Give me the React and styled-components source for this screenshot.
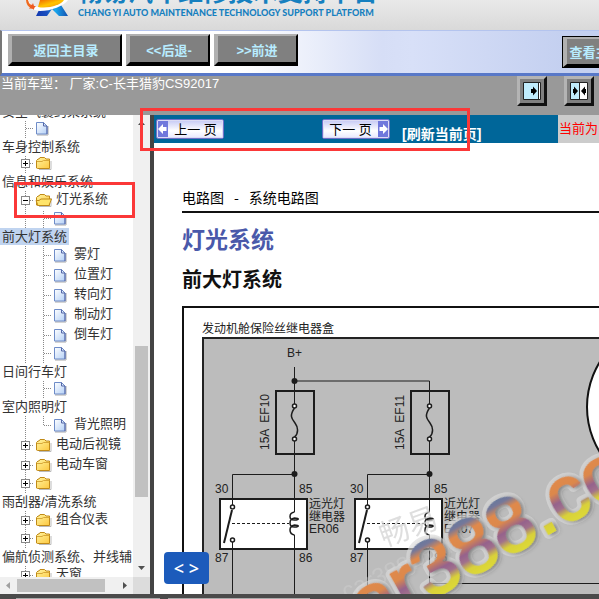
import React from 'react';
import styled, { createGlobalStyle, css } from 'styled-components';

const cjk = '"Liberation Sans", "Noto Sans CJK SC", sans-serif';

const GlobalStyle = createGlobalStyle`
  *, *::before, *::after { box-sizing: border-box; }
  body { margin: 0; font-family: ${cjk}; font-size: 13px; background: #fff; }
  button { font-family: inherit; padding: 0; cursor: pointer; }
  ul { list-style: none; margin: 0; padding: 0; }
`;

const Page = styled.div`
  position: relative;
  display: flex;
  flex-direction: column;
  height: 100vh;
  overflow: hidden;
`;

/* ---------- header ---------- */

const Header = styled.header`
  flex: 0 0 30px;
  display: flex;
  align-items: flex-end;
  gap: 8px;
  padding-left: 24px;
  overflow: hidden;
  background: linear-gradient(#e9e9e9, #d9d9d9);
`;

const LogoMark = styled.svg`
  flex: none;
  width: 46px;
  height: 30px;
`;

const Brand = styled.div`
  display: flex;
  flex-direction: column;
  white-space: nowrap;
  color: #1680bf;
`;

const BrandName = styled.h1`
  margin: 0;
  font: 700 25px/32px "Noto Sans CJK SC", sans-serif;
`;

const BrandSub = styled.span`
  padding-bottom: 10px;
  font: 900 9px/14px Lato, sans-serif;
`;

const Toolbar = styled.nav`
  flex: 0 0 46px;
  display: flex;
  align-items: flex-start;
  gap: 4px;
  padding: 3px 0 0 6px;
  overflow: hidden;
  border-left: 2px solid #777;
  border-top: 1px solid #b4c4ee;
  border-bottom: 3px solid #5878c8;
  background: linear-gradient(90deg, #fff 0, #fff 240px, #d6def6 380px, #d8e0f8 410px, #c4d0f0 560px);
`;

const ToolButton = styled.button`
  flex: 0 0 ${(p) => p.$width}px;
  height: 32px;
  border: 4px solid;
  border-color: #b0b0b0 #000 #000 #b0b0b0;
  border-top-width: 2px;
  border-right-width: 2px;
  background: #808080;
  color: #b8ecff;
  font-size: 13px;
  font-weight: 700;
  white-space: nowrap;
  ${(p) => p.$last && css`
    margin: 2px -29px 0 auto;
    outline: 1px solid #000;
    outline-offset: -1px;
    border-width: 3px 4px 4px 5px;
  `}
`;

const StatusBar = styled.div`
  flex: 0 0 39px;
  display: flex;
  align-items: flex-start;
  gap: 17px;
  padding: 0 5px 0 1px;
  background: #999;
  color: #fff;
`;

const StatusText = styled.span`
  flex: 1;
  line-height: 15px;
`;

const IconButton = styled.button`
  width: 30px;
  height: 30px;
  display: grid;
  place-items: center;
  border: 3px solid;
  border-color: #b4b4b4 #111 #111 #b4b4b4;
  background: #808080;
`;

/* ---------- main split ---------- */

const Main = styled.div`
  flex: 1;
  min-height: 0;
  display: flex;
`;

const Sidebar = styled.aside`
  flex: 0 0 154px;
  display: grid;
  grid-template: minmax(0, 1fr) 17px / minmax(0, 1fr) 17px;
  border-right: 4px solid #444;
`;

const TreeView = styled.div`
  overflow: hidden;
  color: #333;
`;

const TreeList = styled.ul`
  margin-top: -12px;
`;

const TreeItem = styled.li`
  white-space: nowrap;
`;

const TreeRow = styled.div`
  display: flex;
  align-items: ${(p) => (p.$solo ? 'flex-start' : 'center')};
  height: ${(p) => (p.$solo ? 18 : 20)}px;
  padding-left: 16px;
`;

const dots = 'transparent 0 1px, #888 1px 2px';

const Guide = styled.span`
  flex: 0 0 18px;
  align-self: stretch;
  display: flex;
  align-items: ${(p) => (p.$solo ? 'flex-start' : 'center')};
  padding: ${(p) => (p.$solo ? '4px' : '0')} 0 0 5px;
  background-repeat: no-repeat;
  background-image: repeating-linear-gradient(${dots})
    ${(p) => p.$branch && `, repeating-linear-gradient(90deg, ${dots})`};
  background-size: 1px ${(p) => (p.$end ? '50%' : '100%')}, 9px 1px;
  background-position: 9px 0, 9px ${(p) => (p.$solo ? 8 : 10)}px;
`;

const Toggle = styled.button`
  width: 9px;
  height: 9px;
  display: block;
  border: 1px solid #888;
  background:
    linear-gradient(#000, #000) center / 5px 1px no-repeat,
    ${(p) => !p.$open && 'linear-gradient(#000, #000) center / 1px 5px no-repeat,'}
    #fff;
`;

const NodeIcon = styled.svg`
  flex: none;
  width: 18px;
  height: 16px;
  margin: 0 3px 0 1px;
`;

const NodeText = styled.span`
  line-height: 18px;
  padding-bottom: 2px;
`;

const WrappedText = styled.span`
  display: block;
  width: max-content;
  height: 17px;
  padding: 0 2px;
  line-height: 17px;
  background: ${(p) => (p.$selected ? '#c0d4f0' : 'transparent')};
`;

const Track = styled.div`
  display: grid;
  place-items: center;
  background: #f0f0f0;
  ${(p) => (p.$horizontal
    ? 'grid-template-columns: 17px 88px 1fr 17px; grid-template-rows: 13px; align-content: center;'
    : 'grid-template-rows: 17px 1fr 151px 63px 17px; grid-template-columns: 13px; justify-content: center;')}
`;

const Thumb = styled.div`
  width: 100%;
  height: 100%;
  background: #c1c1c1;
  grid-area: ${(p) => p.$area};
`;

const Arrow = styled.svg`
  width: 9px;
  height: 9px;
  grid-area: ${(p) => p.$area};
  fill: ${(p) => p.$color || '#505050'};
`;

const Corner = styled.div`
  background: #dcdcdc;
`;

const Content = styled.main`
  flex: 1;
  min-width: 0;
  display: flex;
  flex-direction: column;
  background: #fff;
`;

const PagerRow = styled.div`
  flex: 0 0 28px;
  display: flex;
`;

const Pager = styled.div`
  flex: 1;
  display: flex;
  align-items: center;
  padding-left: 2px;
  background: #006699;
`;

const PageButton = styled.button`
  display: flex;
  align-items: stretch;
  width: 68px;
  height: 20px;
  margin-right: ${(p) => p.$gap}px;
  border: 1px solid #7070c8;
  border-radius: 2px;
  outline: 1px solid #dcdcf4;
  outline-offset: -2px;
  background: linear-gradient(#c4c8f4, #fff 60%, #e8e8ff);
  color: #000;
  font-size: 13px;
`;

const PageLabel = styled.span`
  flex: 1;
  line-height: 19px;
  white-space: nowrap;
  text-align: center;
`;

const PageArrow = styled.svg`
  width: 11px;
  height: 18px;
  background: #7078dc;
`;

const RefreshLink = styled.a`
  align-self: flex-end;
  color: #fff;
  font-size: 14px;
  font-weight: 700;
  line-height: 18px;
  text-decoration: none;
  white-space: nowrap;
`;

const Notice = styled.div`
  flex: 0 0 41px;
  padding-left: 1px;
  background: #ccc;
  color: #f00;
  line-height: 27px;
  overflow: hidden;
  white-space: nowrap;
`;

const Document = styled.article`
  flex: 1;
  min-height: 0;
  display: flex;
  flex-direction: column;
  padding: 44px 0 0 28px;
  font-family: "Noto Sans CJK SC", sans-serif;
`;

const Crumb = styled.p`
  display: flex;
  gap: 10px;
  margin: 0;
  height: 26px;
  border-bottom: 2px solid #111;
  font-size: 14px;
  line-height: 21px;
`;

const Title = styled.h2`
  margin: 9px 0 0;
  color: #4a59aa;
  font-size: 23px;
  font-weight: 700;
  line-height: 32px;
`;

const Subtitle = styled.h3`
  margin: 11px 0 0;
  color: #111;
  font-size: 20px;
  font-weight: 700;
  line-height: 28px;
`;

const Sheet = styled.section`
  flex: 1;
  min-height: 0;
  display: flex;
  flex-direction: column;
  margin-top: 13px;
  padding: 11px 0 0 18px;
  border: solid #111;
  border-width: 2px 0 0 2px;
`;

const SheetLabel = styled.span`
  color: #222;
  font-size: 12px;
  line-height: 18px;
`;

const Panel = styled.div`
  flex: 1;
  min-height: 0;
  overflow: hidden;
  border: solid #222;
  border-width: 2px 0 0 2px;
  background: #bcbcbc;
`;

const Diagram = styled.svg`
  display: block;
  width: 395px;
  height: 255px;
  overflow: visible;
  font-family: ${cjk};
  font-size: 12px;
`;

const BottomEdge = styled.footer`
  flex: 0 0 5px;
  display: flex;
  align-items: flex-end;
  gap: 8px;
  padding-left: 16px;
  background: #4a4a4a;
`;

const EdgeLine = styled.span`
  flex: ${(p) => p.$flex};
  height: 1px;
  background: #aaa;
`;

const CodeButton = styled.button`
  position: absolute;
  left: 164px;
  bottom: 15px;
  width: 45px;
  height: 32px;
  border: 0;
  border-radius: 4px;
  background: #1c5bbb;
  color: #fff;
  font: 600 18px/28px "Open Sans", sans-serif;
`;

const Marker = styled.div`
  position: absolute;
  left: ${(p) => p.$x}px;
  top: ${(p) => p.$y}px;
  width: ${(p) => p.$w}px;
  height: ${(p) => p.$h}px;
  border: 3px solid #fb3838;
  pointer-events: none;
`;

/* ---------- icons ---------- */

const Logo = () => (
  <LogoMark viewBox="0 0 46 30" aria-hidden="true">
    <defs>
      <linearGradient id="leg" x1="0" y1="0" x2="1" y2="0">
        <stop offset="0" stopColor="#1238b0" />
        <stop offset=".35" stopColor="#1a50c0" />
        <stop offset=".6" stopColor="#18a8ee" />
        <stop offset="1" stopColor="#1450b0" />
      </linearGradient>
      <linearGradient id="swoosh" x1="0" y1="0" x2="1" y2="1">
        <stop offset="0" stopColor="#f06a00" />
        <stop offset=".5" stopColor="#ffc400" />
        <stop offset="1" stopColor="#f58a10" />
      </linearGradient>
    </defs>
    <path d="M17 6 12 16h11l5-7 7 7h9L37 5 17 6z" fill="url(#leg)" />
    <path d="M2 0h3c0 4 4 7 11 7C26 7 36 3 38 0h6c-4 6-17 11-28 11C7 10 2 6 2 0z" fill="#fff" />
    <path d="M14 7C24 9 37 5 40 0H16z" fill="url(#swoosh)" />
    <path d="M2 0h2c1 4 3 6 7 8l-3 1C4 7 2 4 2 0z" fill="#ee6a20" />
    <path d="M9 3 10 6 12 6 10 8 10 10 8 8 5 9 7 6 6 4 8 5z" fill="#ee5a20" />
  </LogoMark>
);

const FileIcon = () => (
  <NodeIcon viewBox="0 0 18 16" aria-hidden="true">
    <defs>
      <linearGradient id="paper" x1="0" y1="0" x2="1" y2="1">
        <stop offset="0" stopColor="#fff" />
        <stop offset="1" stopColor="#b4d0f6" />
      </linearGradient>
    </defs>
    <path d="M2 15h11V6" fill="none" stroke="#aaa" />
    <path d="M1.500 2.500h7l3.500 3.500v8H1.500z" fill="url(#paper)" stroke="#6e8cc8" />
    <path d="M8.500 2.500v3.500h3.500v8" fill="none" stroke="#5668a8" />
  </NodeIcon>
);

const FolderIcon = ({ open }) => (
  <NodeIcon viewBox="0 0 18 16" aria-hidden="true">
    <defs>
      <linearGradient id="folder" x1="0" y1="0" x2="1" y2="1">
        <stop offset="0" stopColor="#fff4a0" />
        <stop offset="1" stopColor="#fdc840" />
      </linearGradient>
    </defs>
    <path d="M4 14.500h12V6" fill="none" stroke="#bbb" />
    <path d="M1.500 13V5.500L3 4h1l1-1.500h4.500L11 4h3.500v9.500h-12z" fill="url(#folder)" stroke="#c08a18" />
    {open
      ? <path d="M1 8.500h3l2-1.500h10.500L14 13.500H3z" fill="#ffe46a" stroke="#c08a18" />
      : <path d="M2 6.500h5l1.500-1h6" fill="none" stroke="#d8a838" />}
  </NodeIcon>
);

const CollapseIcon = () => (
  <svg width="18" height="18" viewBox="0 0 18 18" aria-hidden="true">
    <path d="M.5.5h17v17H.5z" fill="#c0ecfc" stroke="#222" />
    <path d="M15 1h2v16h-2z" fill="#fff" />
    <path d="M15.500 1v16" stroke="#222" />
    <path d="m10 4.500 4 4.500-4 4.500z" />
    <path d="M8 7h2v4H8z" />
  </svg>
);

const SplitIcon = () => (
  <svg width="18" height="18" viewBox="0 0 18 18" aria-hidden="true">
    <path d="M.5.5h17v17H.5z" fill="#fff" stroke="#222" />
    <path d="M1 1h8v16H1z" fill="#c0ecfc" />
    <path d="M9.500 1v16" stroke="#222" />
    <path d="M3 7h1V4.500L8 9l-4 4.500V11H3zM16 7h-1V4.500L11 9l4 4.500V11h1z" />
  </svg>
);

const NavArrow = ({ forward }) => (
  <PageArrow viewBox="0 0 11 18" aria-hidden="true">
    <path
      d={forward ? 'M1.500 7H5V4l5 5-5 5v-3H1.500z' : 'M9.500 7H6V4L1 9l5 5v-3h3.500z'}
      fill="#fff"
    />
  </PageArrow>
);

/* ---------- tree ---------- */

const nodes = [
  { level: 1, kind: 'file', text: '安全气囊约束系统', wrapped: true, lead: true },
  { level: 1, kind: 'file', text: '车身控制系统', wrapped: true },
  { level: 1, kind: 'folder', text: '信息和娱乐系统', wrapped: true },
  { level: 1, kind: 'folder', text: '灯光系统', open: true },
  { level: 2, kind: 'file', text: '前大灯系统', wrapped: true, selected: true },
  { level: 2, kind: 'file', text: '雾灯' },
  { level: 2, kind: 'file', text: '位置灯' },
  { level: 2, kind: 'file', text: '转向灯' },
  { level: 2, kind: 'file', text: '制动灯' },
  { level: 2, kind: 'file', text: '倒车灯' },
  { level: 2, kind: 'file', text: '日间行车灯', wrapped: true },
  { level: 2, kind: 'file', text: '室内照明灯', wrapped: true },
  { level: 2, kind: 'file', text: '背光照明', end: true },
  { level: 1, kind: 'folder', text: '电动后视镜' },
  { level: 1, kind: 'folder', text: '电动车窗' },
  { level: 1, kind: 'folder', text: '雨刮器/清洗系统', wrapped: true },
  { level: 1, kind: 'folder', text: '组合仪表' },
  { level: 1, kind: 'folder', text: '偏航侦测系统、并线辅', wrapped: true },
  { level: 1, kind: 'folder', text: '天窗' },
];

function TreeNode({ node }) {
  const { level, kind, text, wrapped, lead, open, selected, end } = node;
  const folder = kind === 'folder';
  return (
    <TreeItem>
      {!lead && (
        <TreeRow $solo={wrapped}>
          {level === 2 && <Guide $solo={wrapped} />}
          <Guide $solo={wrapped} $branch $end={end}>
            {folder && <Toggle $open={open} aria-label={text} aria-expanded={!!open} />}
          </Guide>
          {folder ? <FolderIcon open={open} /> : <FileIcon />}
          {!wrapped && <NodeText>{text}</NodeText>}
        </TreeRow>
      )}
      {wrapped && <WrappedText $selected={selected}>{text}</WrappedText>}
    </TreeItem>
  );
}

/* ---------- wiring diagram ---------- */

function Branch({ x, fuse, relay, children }) {
  return (
    <g transform={`translate(${x} 0)`}>
      <g fill="none" stroke="#1c1c1c">
        <rect x="-18" y="391" width="38" height="63" strokeWidth="2" />
        <path d="M.5 381v23M.5 441v58M.5 474.500H-61.500V505" />
        <path d="M.5 408C-5 416-2 419 1 423S5 433 .5 437" strokeWidth="1.500" />
        <rect x="-74" y="499" width="87" height="50" fill="#fff" strokeWidth="2" />
        <path d="M-61.500 499v6M-61.500 542v60M.5 499v13" />
        <path d="M-62 510-70 543" strokeWidth="2" />
        <path d="M-62 523.500H-5" strokeDasharray="3 2" />
        <path d="M.5 512c-6 1-6 8 0 8 5 0 5-2 0-2-6 1-6 9 0 9 5 0 5-2 0-2-6 1-6 9 0 10" strokeWidth="1.500" />
      </g>
      <circle cx=".5" cy="474" r="3" fill="#1c1c1c" />
      <g fill="#fff" stroke="#1c1c1c" strokeWidth="1.500">
        <circle cx=".5" cy="406" r="2" />
        <circle cx=".5" cy="439" r="2" />
        <circle cx="-61.500" cy="507" r="2" />
        <circle cx="-61.500" cy="540" r="2" />
      </g>
      <g fill="#222">
        <text transform="translate(-25 450) rotate(-90)" xmlSpace="preserve">{`15A  ${fuse}`}</text>
        <text x="-79" y="493">30</text>
        <text x="5" y="493">85</text>
        <text x="-79" y="562">87</text>
        <text x="5" y="562">86</text>
        <text x="15" y="508">{relay[0]}</text>
        <text x="15" y="521">{relay[1]}</text>
        <text x="15" y="533">{relay[2]}</text>
      </g>
      {children}
    </g>
  );
}

const Watermark = () => (
  <g>
    <defs>
      <linearGradient id="rainbow" gradientUnits="userSpaceOnUse" x1="0" y1="-56" x2="0" y2="0">
        <stop offset="0" stopColor="#66789c" />
        <stop offset=".1" stopColor="#74789a" />
        <stop offset=".24" stopColor="#e0894c" />
        <stop offset=".42" stopColor="#dc884c" />
        <stop offset=".6" stopColor="#95628c" />
        <stop offset=".72" stopColor="#a0708c" />
        <stop offset=".86" stopColor="#d8d03a" />
        <stop offset="1" stopColor="#dcd838" />
      </linearGradient>
      <filter id="shade" x="-10%" y="-20%" width="120%" height="150%">
        <feDropShadow dx="2" dy="2" stdDeviation="2" floodColor="#444" floodOpacity=".6" />
      </filter>
    </defs>
    <g fill="#d4d4d4" opacity=".75">
      <text transform="translate(384 547) rotate(-20)" fontSize="30">畅易</text>
      <text transform="translate(346 600) rotate(-24)" fontSize="24" opacity=".5">car388.com</text>
    </g>
    <g
      transform="translate(368 634) rotate(-29)"
      fontSize="78"
      strokeLinejoin="round"
    >
      <text stroke="#dcdcdc" strokeWidth="10" fill="#dcdcdc" opacity=".65" aria-hidden="true">ar388.com</text>
      <text fill="url(#rainbow)" stroke="url(#rainbow)" strokeWidth="2" filter="url(#shade)">ar388.com</text>
    </g>
  </g>
);

const Circuit = () => (
  <Diagram viewBox="204 339 395 255" role="img" aria-label="前大灯系统电路图">
    <path d="M294.500 367v14h135" fill="none" stroke="#1c1c1c" />
    <circle cx="294.500" cy="381" r="3" fill="#1c1c1c" />
    <text x="287" y="357" fill="#222">B+</text>
    <Branch x={294} fuse="EF10" relay={['远光灯', '继电器', 'ER06']}>
      <path d="M.5 535v67" stroke="#1c1c1c" />
    </Branch>
    <circle cx="673" cy="407" r="86" fill="#fff" stroke="#111" strokeWidth="2" />
    <Branch x={429} fuse="EF11" relay={['近光灯', '继电器', 'ER07']}>
      <path d="M.5 535v48.500H180" fill="none" stroke="#1c1c1c" />
    </Branch>
    <Watermark />
  </Diagram>
);

export default function App() {
  return (
    <Page>
      <GlobalStyle />
      <Header>
        <Logo />
        <Brand>
          <BrandName>畅易汽车维修技术支持平台</BrandName>
          <BrandSub>CHANG YI AUTO MAINTENANCE TECHNOLOGY SUPPORT PLATFORM</BrandSub>
        </Brand>
      </Header>
      <Toolbar>
        <ToolButton $width={114}>返回主目录</ToolButton>
        <ToolButton $width={84}>&lt;&lt;后退-</ToolButton>
        <ToolButton $width={84}>&gt;&gt;前进</ToolButton>
        <ToolButton $width={66} $last>查看主页</ToolButton>
      </Toolbar>
      <StatusBar>
        <StatusText>当前车型： 厂家:C-长丰猎豹CS92017</StatusText>
        <IconButton aria-label="收起目录"><CollapseIcon /></IconButton>
        <IconButton aria-label="还原分栏"><SplitIcon /></IconButton>
      </StatusBar>
      <Main>
        <Sidebar>
          <TreeView>
            <TreeList>
              {nodes.map((node) => <TreeNode key={node.text} node={node} />)}
            </TreeList>
          </TreeView>
          <Track>
            <Arrow $area="1 / 1" viewBox="0 0 9 9"><path d="M1 6h7L4.500 2z" /></Arrow>
            <Thumb $area="3 / 1" />
            <Arrow $area="5 / 1" viewBox="0 0 9 9"><path d="M1 2h7L4.500 6z" /></Arrow>
          </Track>
          <Track $horizontal>
            <Arrow $area="1 / 1" $color="#a0a0a0" viewBox="0 0 9 9"><path d="M6 1v7L2 4.500z" /></Arrow>
            <Thumb $area="1 / 2" />
            <Arrow $area="1 / 4" viewBox="0 0 9 9"><path d="M3 1v7l4-3.500z" /></Arrow>
          </Track>
          <Corner />
        </Sidebar>
        <Content>
          <PagerRow>
            <Pager>
              <PageButton $gap={98}><NavArrow /><PageLabel>上一 页</PageLabel></PageButton>
              <PageButton $gap={12}><PageLabel>下一 页</PageLabel><NavArrow forward /></PageButton>
              <RefreshLink href="#">[刷新当前页]</RefreshLink>
            </Pager>
            <Notice>当前为</Notice>
          </PagerRow>
          <Document>
            <Crumb>
              <span>电路图</span>
              <span>-</span>
              <span>系统电路图</span>
            </Crumb>
            <Title>灯光系统</Title>
            <Subtitle>前大灯系统</Subtitle>
            <Sheet>
              <SheetLabel>发动机舱保险丝继电器盒</SheetLabel>
              <Panel><Circuit /></Panel>
            </Sheet>
          </Document>
        </Content>
      </Main>
      <BottomEdge>
        <EdgeLine $flex="0 0 144px" />
        <EdgeLine $flex="0 0 142px" />
      </BottomEdge>
      <CodeButton>&lt; &gt;</CodeButton>
      <Marker $x={14} $y={182} $w={121} $h={36} />
      <Marker $x={140} $y={108} $w={330} $h={43} />
    </Page>
  );
}
